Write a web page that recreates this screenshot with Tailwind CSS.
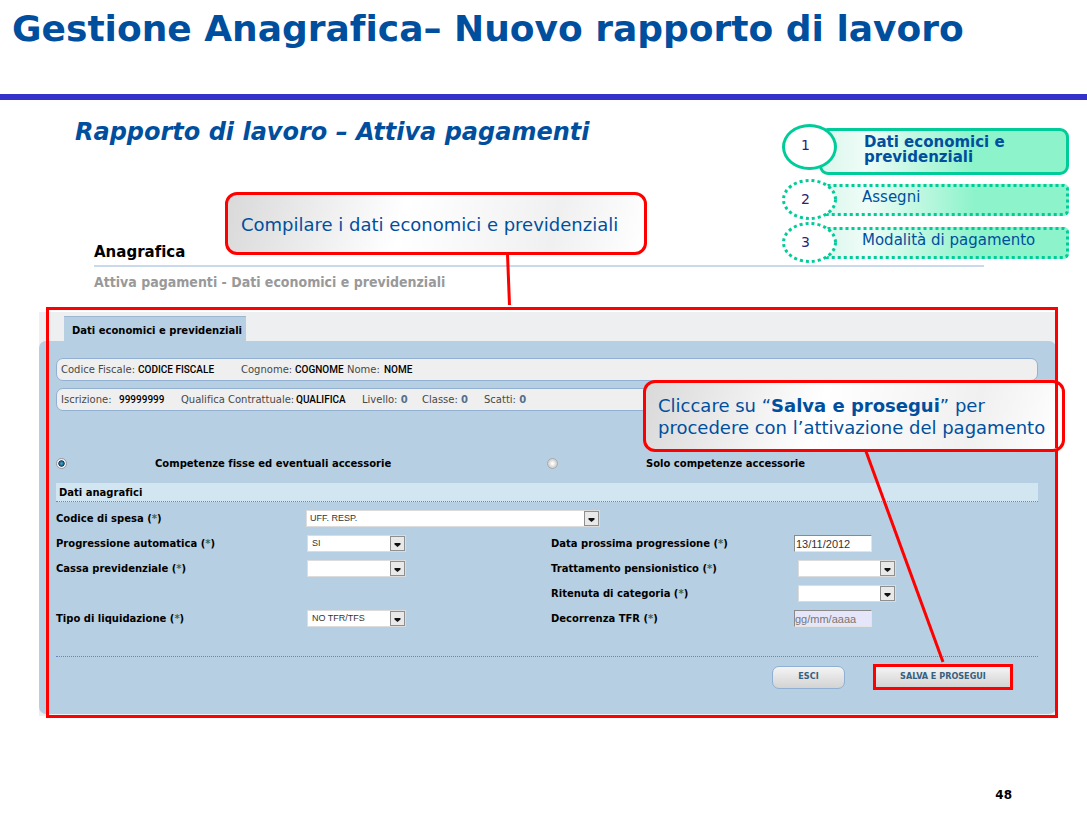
<!DOCTYPE html>
<html lang="it">
<head>
<meta charset="utf-8">
<title>Gestione Anagrafica – Nuovo rapporto di lavoro</title>
<script src="https://cdn.jsdelivr.net/npm/@tailwindcss/browser@4"></script>
</head>
<body class="relative flex min-h-screen flex-col bg-white font-['DejaVu_Sans',sans-serif] text-[#004f9e] [font-variant-ligatures:none]">
<header class="border-b-[6px] border-[#3333cc] px-3 pt-[7px] pb-[43px]">
  <h1 class="text-[36px] leading-[44px] font-bold whitespace-nowrap">Gestione Anagrafica– Nuovo rapporto di lavoro</h1>
</header>

<main class="relative">
  <div class="flex justify-between pt-5 pr-[18px] pl-[75px]">
    <div class="flex flex-col justify-between">
      <h2 class="text-[24px] leading-6 font-bold whitespace-nowrap italic">Rapporto di lavoro – Attiva pagamenti</h2>
      <h3 class="ml-[19px] text-[15px] leading-[22px] font-bold text-black">Anagrafica</h3>
    </div>
    <ol class="mt-1 w-[287px] text-[15px]">
      <li class="mb-1 flex h-[51px]">
        <span class="relative z-10 -mr-[18px] flex h-[46px] w-[55px] shrink-0 items-center justify-center rounded-[50%] border-[3px] border-[#00cc99] bg-white pr-2 pb-1 text-[14px] text-[#2b2375]">1</span>
        <strong class="mt-1 flex flex-1 items-center rounded-[9px] border-[3px] border-[#00cc99] bg-[linear-gradient(90deg,#d9f7ec,#effcf7_18%,#8cf3ca_62%)] pb-1 pl-[42px] leading-[15px]">Dati economici e previdenziali</strong>
      </li>
      <li class="mb-[2px] flex h-[41px] items-center">
        <span class="relative z-10 -mr-[15px] flex h-[41px] w-[55px] shrink-0 items-center justify-center pr-2 text-[14px] text-[#2b2375]">
          <svg class="absolute inset-0 -z-10" width="55" height="41"><ellipse cx="27.5" cy="20.5" rx="26" ry="19" fill="#fff" stroke="#00cc99" stroke-width="3" stroke-dasharray="3 3"/></svg>2</span>
        <span class="relative flex h-8 flex-1 items-center rounded-[5px] bg-[linear-gradient(90deg,#d9f7ec,#effcf7_18%,#8cf3ca_62%)] pb-1 pl-[40px]">
          <svg class="absolute inset-0 h-full w-full"><rect x="1.5" y="1.5" rx="4" fill="none" stroke="#00cc99" stroke-width="3" stroke-dasharray="3 3" class="h-[calc(100%-3px)] w-[calc(100%-3px)]"/></svg>Assegni</span>
      </li>
      <li class="flex h-[41px] items-center">
        <span class="relative z-10 -mr-[15px] flex h-[41px] w-[55px] shrink-0 items-center justify-center pr-2 text-[14px] text-[#2b2375]">
          <svg class="absolute inset-0 -z-10" width="55" height="41"><ellipse cx="27.5" cy="20.5" rx="26" ry="19" fill="#fff" stroke="#00cc99" stroke-width="3" stroke-dasharray="3 3"/></svg>3</span>
        <span class="relative flex h-8 flex-1 items-center rounded-[5px] bg-[linear-gradient(90deg,#d9f7ec,#effcf7_18%,#8cf3ca_62%)] pb-1 pl-[40px] whitespace-nowrap">
          <svg class="absolute inset-0 h-full w-full"><rect x="1.5" y="1.5" rx="4" fill="none" stroke="#00cc99" stroke-width="3" stroke-dasharray="3 3" class="h-[calc(100%-3px)] w-[calc(100%-3px)]"/></svg>Modalità di pagamento</span>
      </li>
    </ol>
  </div>
  <hr class="mt-[2px] mr-[103px] ml-[94px] border-t-2 border-[#cbd9ed]">
  <p class="mt-[5px] ml-[94px] font-['DejaVu_Sans_Condensed','DejaVu_Sans',sans-serif] text-[14px] leading-5 font-bold text-[#999]">Attiva pagamenti - Dati economici e previdenziali</p>

  <!-- Nota sulla compilazione -->
  <div class="absolute top-[92px] left-[225px] flex h-[63px] items-center rounded-[12px] border-[3px] border-[#ff0000] bg-[linear-gradient(105deg,#d9d9d9,#ffffff_42%,#f0f0f0_78%,#ffffff)] pt-[2px] pr-[26px] pl-[13px] text-[18px] leading-[22px] whitespace-nowrap">Compilare i dati economici e previdenziali</div>
  <svg class="absolute top-[154px] left-[500px]" width="16" height="51"><path d="M7.500 0 9.500 51" stroke="#f00" stroke-width="3"/></svg>

  <section class="relative mt-[15px] mr-[31px] ml-[39px] pt-[5px] text-[10px] text-black">
    <div class="bg-[#eeeff1] pt-1 pb-[2px]">
      <div class="ml-[25px] flex h-[25px] w-[182px] items-center border-t border-[#9bb6d0] bg-[#b7cfe2] pt-[2px] pl-2 font-bold whitespace-nowrap">Dati economici e previdenziali</div>
      <form class="rounded-[7px] bg-[#b7cfe2] pt-[17px] pr-[18px] pb-[24px] pl-[17px]">
        <div class="flex h-[23px] items-center rounded-[7px] border border-[#92b1d2] bg-[#efefef] pl-1 whitespace-nowrap text-[#484848]">
          <span class="w-[77px]">Codice Fiscale:</span><b class="w-[103px] font-[Roboto,sans-serif] font-medium text-black">CODICE FISCALE</b>
          <span class="w-[54px]">Cognome:</span><b class="w-[52px] font-[Roboto,sans-serif] font-medium text-black">COGNOME</b>
          <span class="w-[37px]">Nome:</span><b class="font-[Roboto,sans-serif] font-medium text-black">NOME</b>
        </div>
        <div class="mt-[7px] flex h-[23px] items-center rounded-[7px] border border-[#92b1d2] bg-[#efefef] pl-1 whitespace-nowrap text-[#484848]">
          <span class="w-[58px]">Iscrizione:</span><b class="w-[62px] font-[Roboto,sans-serif] font-medium text-black">99999999</b>
          <span class="w-[115px]">Qualifica Contrattuale:</span><b class="w-[66px] font-[Roboto,sans-serif] font-medium text-black">QUALIFICA</b>
          <span class="w-[60px]">Livello: <b class="text-[#53708c]">0</b></span>
          <span class="w-[62px]">Classe: <b class="text-[#53708c]">0</b></span>
          <span>Scatti: <b class="text-[#53708c]">0</b></span>
        </div>

        <div class="mt-[42px] grid h-5 grid-cols-2 font-bold">
          <div class="flex items-center">
            <input type="radio" name="tipo" id="fisse" checked class="size-[11px] appearance-none rounded-full border border-[#9a9a9a] bg-[radial-gradient(circle,#39a0d0_10%,#123a5c_45%,#f2f2f2_55%)]">
            <label for="fisse" class="ml-[88px]">Competenze fisse ed eventuali accessorie</label>
          </div>
          <div class="flex items-center">
            <input type="radio" name="tipo" id="solo" class="size-[11px] appearance-none rounded-full border border-[#aaa] bg-[radial-gradient(circle,#ffffff_10%,#d4d4d4_60%)]">
            <label for="solo" class="ml-[88px]">Solo competenze accessorie</label>
          </div>
        </div>
        <h4 class="mt-[10px] flex h-[19px] items-center border-b border-dotted border-[#5f86d0] bg-[#d2e6f2] pl-[3px] font-bold">Dati anagrafici</h4>

        <div class="mt-1 grid auto-rows-[25px] grid-cols-[251fr_244fr_243fr_244fr] items-center border-b border-dotted border-[#5f86d0] pb-[25px] font-bold whitespace-nowrap">
          <label for="spesa">Codice di spesa (<span class="text-[#3d6457]">*</span>)</label>
          <div class="relative col-span-3 -ml-[1px] w-[294px]">
            <select id="spesa" class="block h-[17px] w-full appearance-none border border-[#dcdcdc] bg-white pl-[3px] font-['Liberation_Sans',sans-serif] text-[9px] leading-[15px] font-normal text-[#333]"><option>UFF. RESP.</option></select>
            <svg class="pointer-events-none absolute top-[1px] right-[1px]" width="15" height="15"><rect x=".5" y=".5" width="14" height="14" fill="#e9e9e9" stroke="#8f8f8f"/><path d="M4.500 7h6v1.500L7.500 11l-3-2.500z" fill="#111"/></svg>
          </div>

          <label for="progr">Progressione automatica (<span class="text-[#3d6457]">*</span>)</label>
          <div class="relative w-[99px]">
            <select id="progr" class="block h-[17px] w-full appearance-none border border-[#dcdcdc] bg-white pl-1 font-['Liberation_Sans',sans-serif] text-[9px] leading-[15px] font-normal text-[#333]"><option>SI</option></select>
            <svg class="pointer-events-none absolute top-[1px] right-[1px]" width="15" height="15"><rect x=".5" y=".5" width="14" height="14" fill="#e9e9e9" stroke="#8f8f8f"/><path d="M4.500 7h6v1.500L7.500 11l-3-2.500z" fill="#111"/></svg>
          </div>
          <label for="data">Data prossima progressione (<span class="text-[#3d6457]">*</span>)</label>
          <input id="data" type="text" value="13/11/2012" class="h-[17px] w-[78px] border border-[#e4e4e4] border-t-[#8a8a8a] border-l-[#8a8a8a] bg-white px-[1px] font-['Liberation_Sans',sans-serif] text-[11px] font-normal text-[#333]">

          <label for="cassa">Cassa previdenziale (<span class="text-[#3d6457]">*</span>)</label>
          <div class="relative w-[99px]">
            <select id="cassa" class="block h-[17px] w-full appearance-none border border-[#dcdcdc] bg-white"><option></option></select>
            <svg class="pointer-events-none absolute top-[1px] right-[1px]" width="15" height="15"><rect x=".5" y=".5" width="14" height="14" fill="#e9e9e9" stroke="#8f8f8f"/><path d="M4.500 7h6v1.500L7.500 11l-3-2.500z" fill="#111"/></svg>
          </div>
          <label for="tratt">Trattamento pensionistico (<span class="text-[#3d6457]">*</span>)</label>
          <div class="relative ml-1 w-[98px]">
            <select id="tratt" class="block h-[17px] w-full appearance-none border border-[#dcdcdc] bg-white"><option></option></select>
            <svg class="pointer-events-none absolute top-[1px] right-[1px]" width="15" height="15"><rect x=".5" y=".5" width="14" height="14" fill="#e9e9e9" stroke="#8f8f8f"/><path d="M4.500 7h6v1.500L7.500 11l-3-2.500z" fill="#111"/></svg>
          </div>

          <label for="rit" class="col-start-3">Ritenuta di categoria (<span class="text-[#3d6457]">*</span>)</label>
          <div class="relative ml-1 w-[98px]">
            <select id="rit" class="block h-[17px] w-full appearance-none border border-[#dcdcdc] bg-white"><option></option></select>
            <svg class="pointer-events-none absolute top-[1px] right-[1px]" width="15" height="15"><rect x=".5" y=".5" width="14" height="14" fill="#e9e9e9" stroke="#8f8f8f"/><path d="M4.500 7h6v1.500L7.500 11l-3-2.500z" fill="#111"/></svg>
          </div>

          <label for="liq">Tipo di liquidazione (<span class="text-[#3d6457]">*</span>)</label>
          <div class="relative w-[99px]">
            <select id="liq" class="block h-[17px] w-full appearance-none border border-[#dcdcdc] bg-white pl-1 font-['Liberation_Sans',sans-serif] text-[9px] leading-[15px] font-normal text-[#333]"><option>NO TFR/TFS</option></select>
            <svg class="pointer-events-none absolute top-[1px] right-[1px]" width="15" height="15"><rect x=".5" y=".5" width="14" height="14" fill="#e9e9e9" stroke="#8f8f8f"/><path d="M4.500 7h6v1.500L7.500 11l-3-2.500z" fill="#111"/></svg>
          </div>
          <label for="tfr">Decorrenza TFR (<span class="text-[#3d6457]">*</span>)</label>
          <input id="tfr" type="text" placeholder="gg/mm/aaaa" class="h-[17px] w-[78px] border border-[#e4e4e4] border-t-[#8a8a8a] border-l-[#8a8a8a] bg-[#e6e6fa] font-['Liberation_Sans',sans-serif] text-[11px] font-normal placeholder:text-[#777]">
        </div>

        <div class="mt-[7px] mr-[25px] flex items-center justify-end gap-7 font-['DejaVu_Sans_Condensed','DejaVu_Sans',sans-serif] text-[9px] text-[#35607f]">
          <button type="button" class="h-[23px] w-[73px] rounded-[7px] border border-[#8fb0d3] bg-linear-to-b from-[#f4f4f4] to-[#d3d3d3] font-bold">ESCI</button>
          <button type="submit" class="h-[26px] w-[140px] border-[3px] border-[#ff0000] bg-linear-to-b from-[#f4f4f4] to-[#d3d3d3] font-bold">SALVA E PROSEGUI</button>
        </div>
      </form>
    </div>

    <!-- Cornice rossa, nota e connettore verso il pulsante -->
    <div class="pointer-events-none absolute top-0 -right-[2px] -bottom-[2px] left-[7px] border-[3px] border-[#ff0000]"></div>
    <div class="absolute top-[73px] -right-[9px] w-[422px] rounded-[12px] border-[3px] border-[#ff0000] bg-[linear-gradient(105deg,#d9d9d9,#ffffff_42%,#f0f0f0_78%,#ffffff)] pt-3 pb-[10px] pl-[12px] text-[18px] leading-[22px] whitespace-nowrap text-[#004f9e]">Cliccare su “<strong>Salva e prosegui</strong>” per<br>procedere con l’attivazione del pagamento</div>
    <svg class="pointer-events-none absolute top-[143px] right-[105px]" width="96" height="213"><path d="M10.500 0 88 212" stroke="#f00" stroke-width="3"/></svg>
    <div class="pointer-events-none absolute top-[76px] -right-[2px] h-[65px] w-[3px] bg-[#ff0000]"></div>
  </section>
</main>

<footer class="mt-auto pr-[75px] pb-[12px] text-right text-[12px] leading-4 font-bold text-black">48</footer>
</body>
</html>
